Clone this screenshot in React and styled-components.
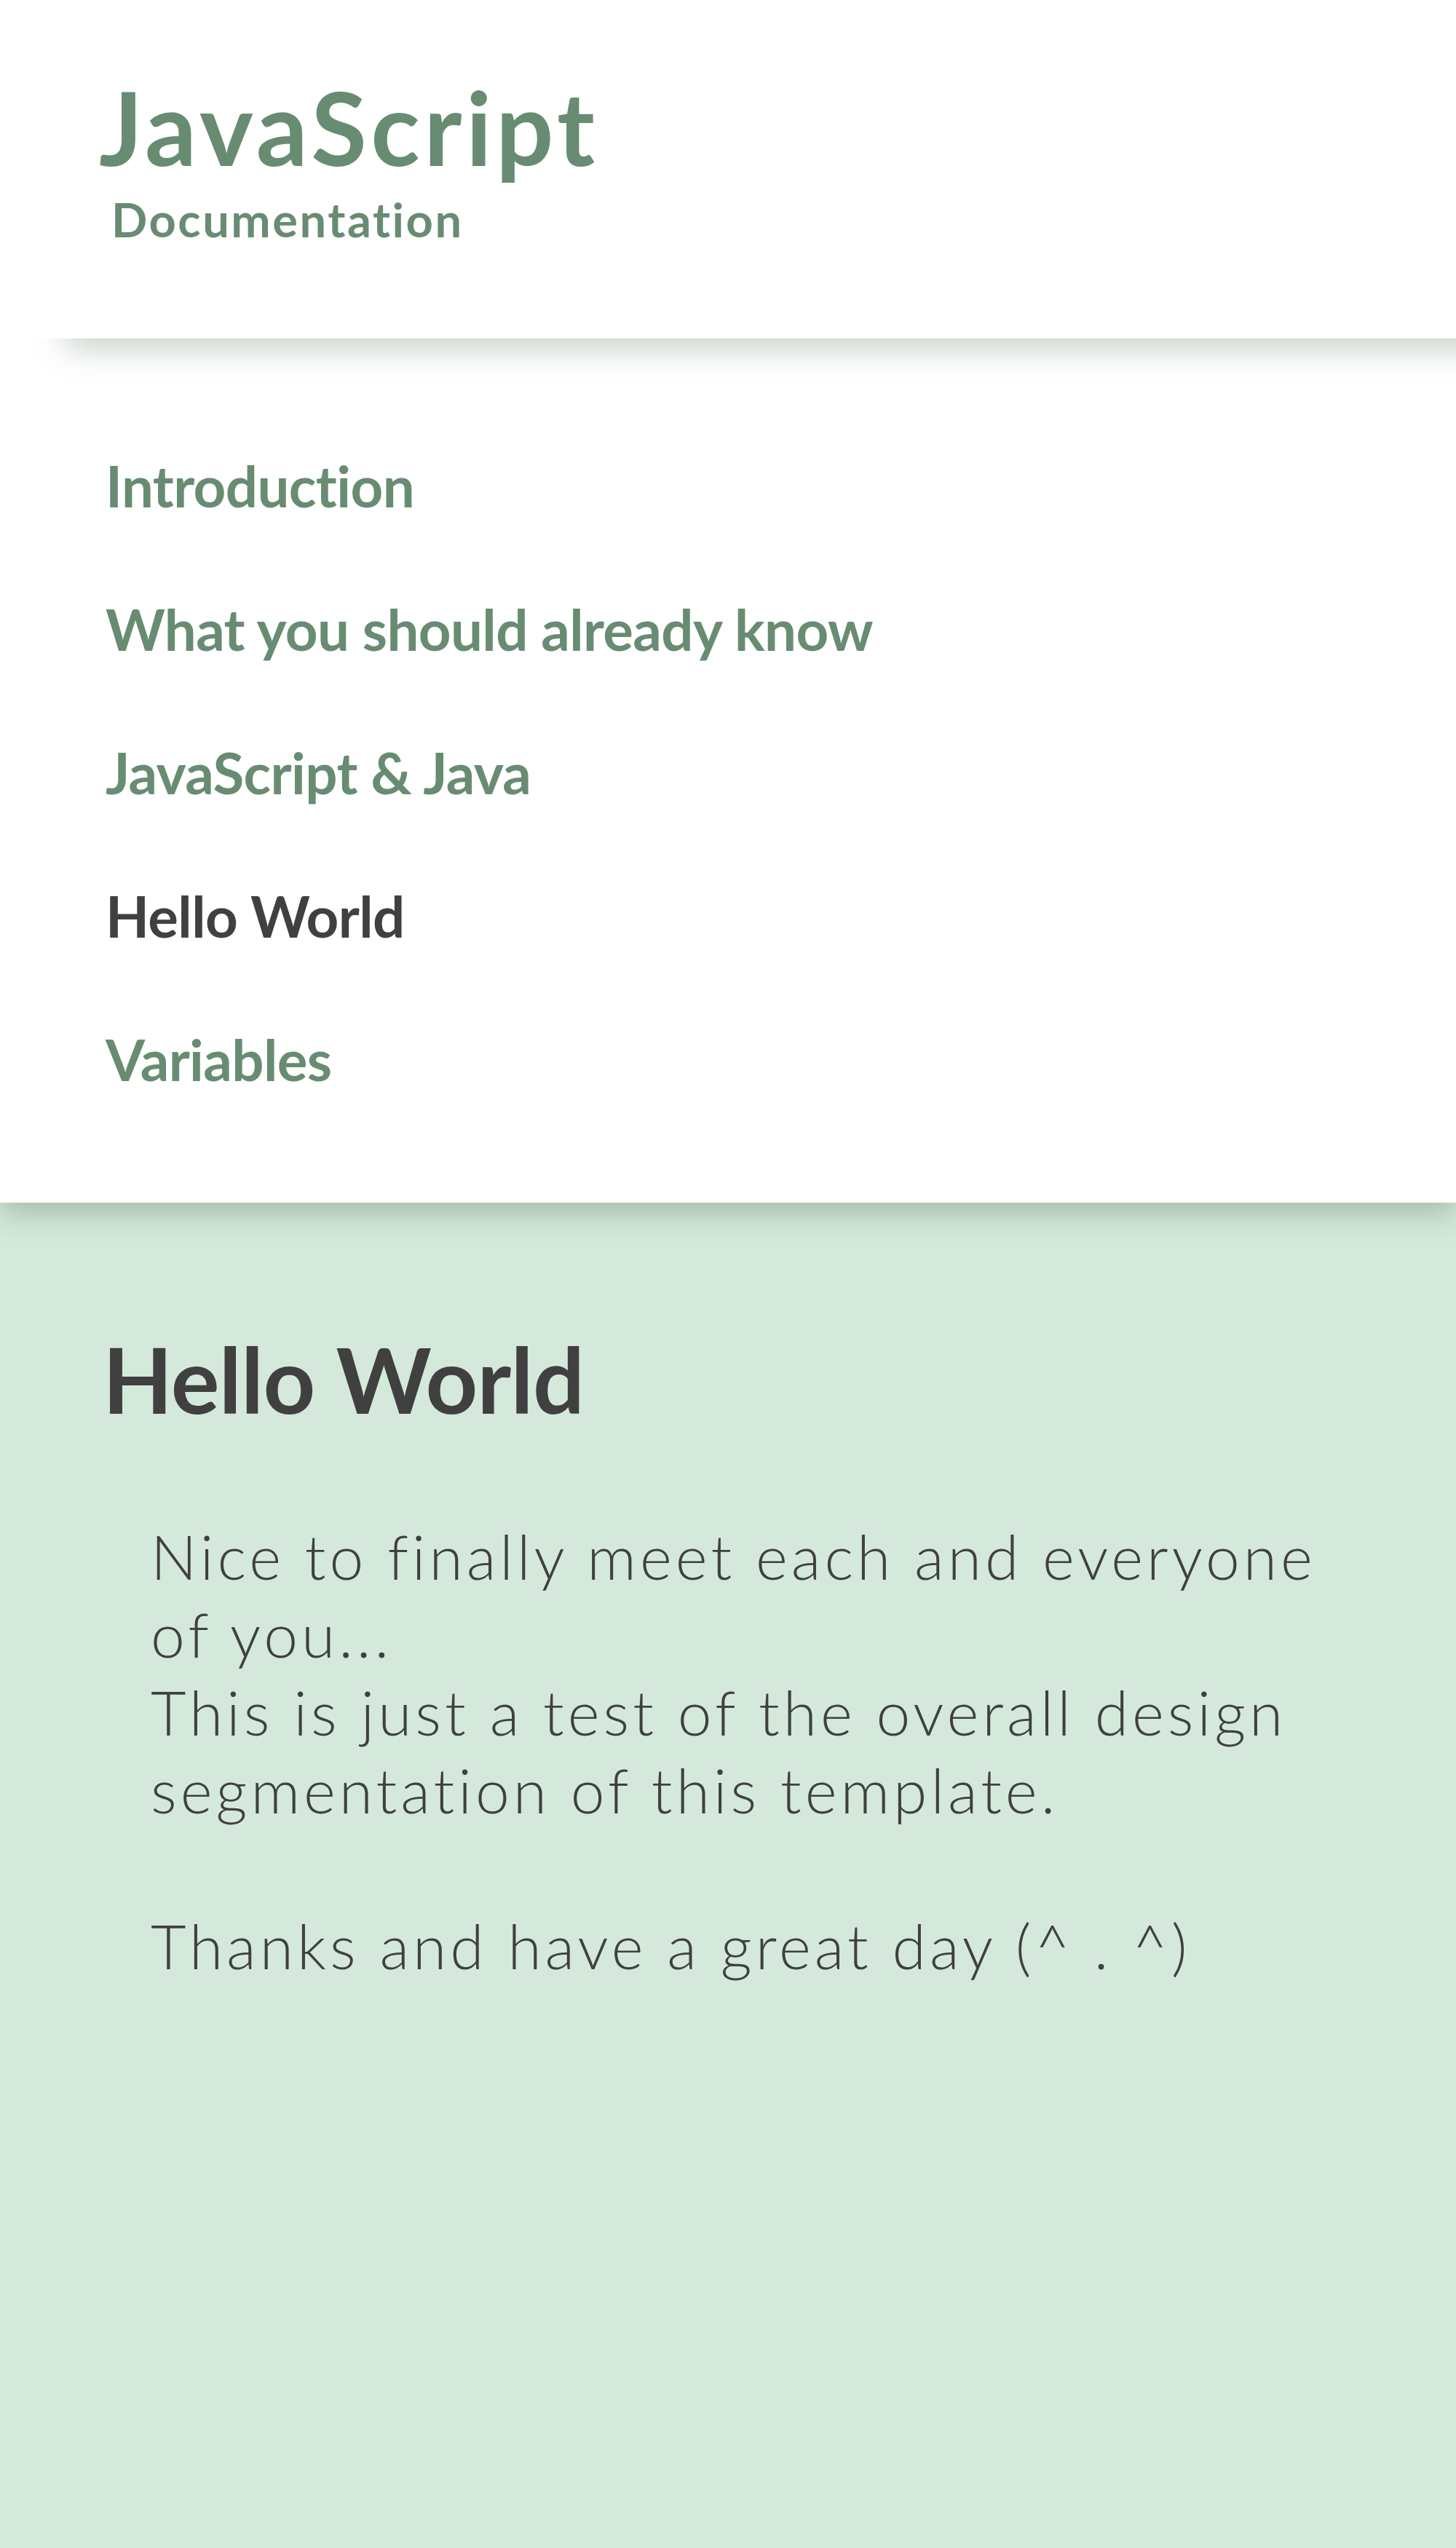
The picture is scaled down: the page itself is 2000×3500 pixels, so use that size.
import React from 'react';
import styled, { createGlobalStyle } from 'styled-components';

const colors = {
  green: '#688c72',
  dark: '#404040',
  mint: '#d4e9db',
  white: '#ffffff',
};

const GlobalStyle = createGlobalStyle`
  html, body {
    margin: 0;
    padding: 0;
    background: ${colors.mint};
  }
  * {
    box-sizing: border-box;
  }
`;

const Page = styled.div`
  min-height: 3500px;
  display: flex;
  flex-direction: column;
  background: ${colors.mint};
  font-family: Lato, 'Open Sans', sans-serif;
`;

const Header = styled.header`
  position: relative;
  z-index: 2;
  height: 465px;
  padding: 104px 0 0 136px;
  background: ${colors.white};
  box-shadow: 90px 14px 40px rgba(96, 128, 104, 0.35);
`;

const Title = styled.h1`
  margin: 0;
  font-size: 140px;
  line-height: 1;
  font-weight: 700;
  letter-spacing: 5.5px;
  color: ${colors.green};
`;

const Subtitle = styled.h2`
  margin: 25px 0 0 17px;
  font-size: 65px;
  line-height: 1;
  font-weight: 700;
  letter-spacing: 2.5px;
  color: ${colors.green};
`;

const Nav = styled.nav`
  position: relative;
  z-index: 1;
  display: flex;
  flex-direction: column;
  gap: 103.4px;
  padding: 156px 0 149px 145px;
  background: ${colors.white};
  box-shadow: 0 12px 40px rgba(80, 110, 90, 0.4);
`;

const NavLink = styled.a`
  display: block;
  font-size: 78px;
  line-height: 1.2;
  font-weight: 700;
  letter-spacing: -0.6px;
  color: ${({ $active }) => ($active ? colors.dark : colors.green)};
  text-decoration: none;
`;

const Main = styled.main`
  flex: 1;
  padding: 167px 150px 0 141px;
  background: ${colors.mint};
`;

const Heading = styled.h2`
  margin: 0;
  font-size: 125px;
  line-height: 1.2;
  font-weight: 700;
  letter-spacing: -0.7px;
  color: ${colors.dark};
`;

const Text = styled.p`
  margin: 115px 0 0 66px;
  font-size: 84px;
  line-height: 107px;
  font-weight: 300;
  letter-spacing: 5px;
  color: ${colors.dark};
`;

const links = [
  'Introduction',
  'What you should already know',
  'JavaScript & Java',
  'Hello World',
  'Variables',
];

export default function App() {
  return (
    <Page>
      <GlobalStyle />
      <Header>
        <Title>JavaScript</Title>
        <Subtitle>Documentation</Subtitle>
      </Header>
      <Nav>
        {links.map((l) => (
          <NavLink key={l} href="#" $active={l === 'Hello World'}>
            {l}
          </NavLink>
        ))}
      </Nav>
      <Main>
        <Heading>Hello World</Heading>
        <Text>
          Nice to finally meet each and everyone
          <br />
          of you...
          <br />
          This is just a test of the overall design
          <br />
          segmentation of this template.
          <br />
          <br />
          Thanks and have a great day (^ . ^)
        </Text>
      </Main>
    </Page>
  );
}
